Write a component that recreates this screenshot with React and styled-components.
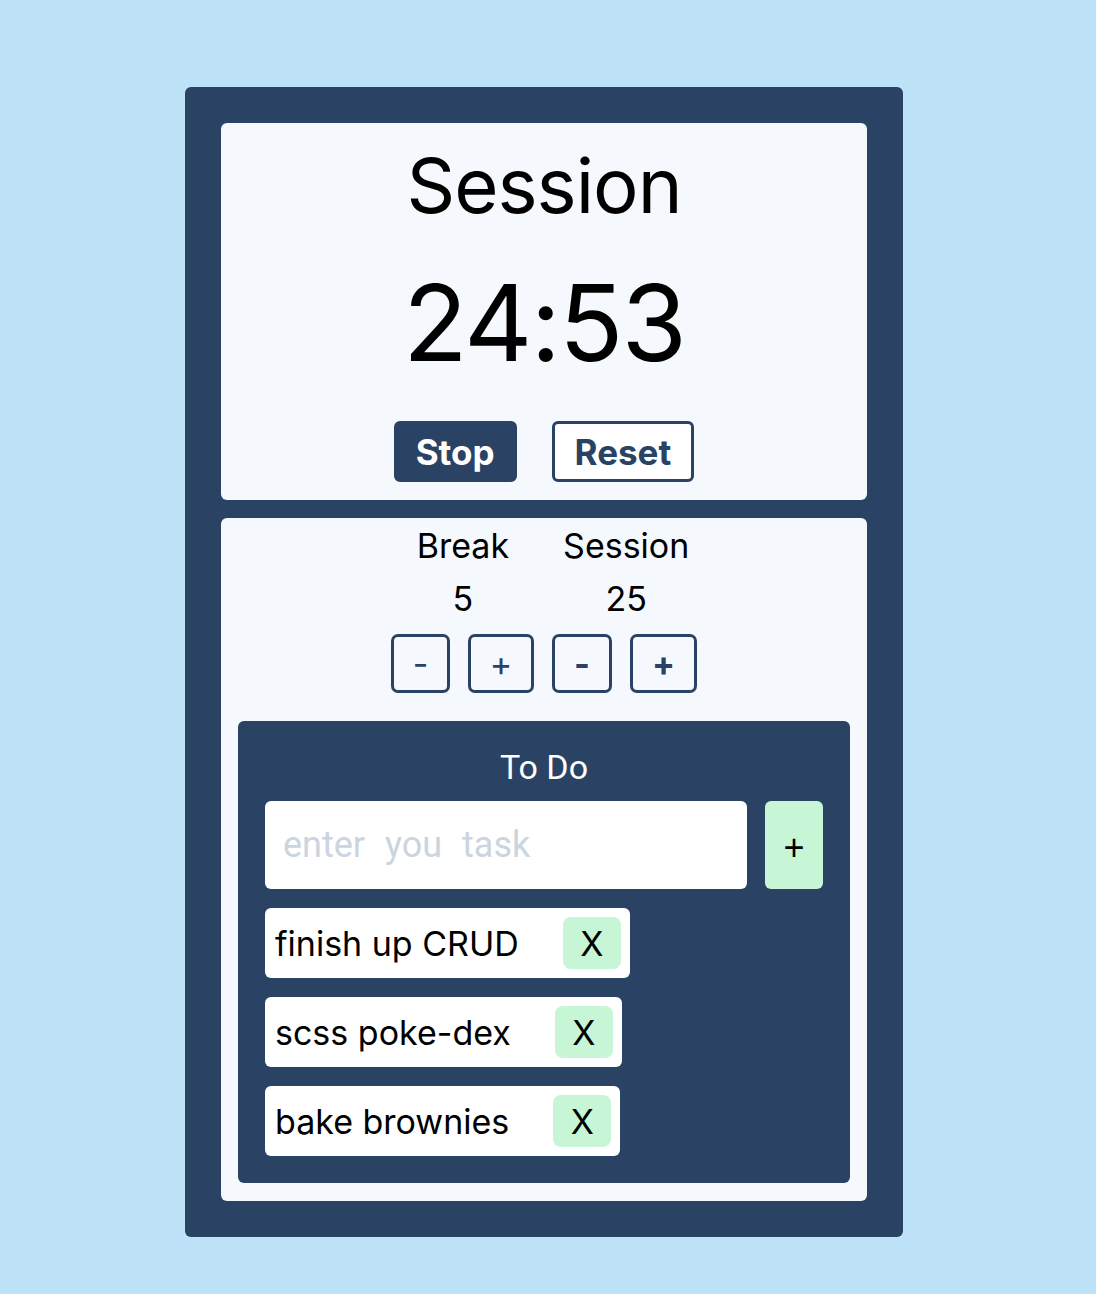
import React from "react";
import styled, { createGlobalStyle } from "styled-components";

const Global = createGlobalStyle`
  html, body { margin: 0; padding: 0; background: #bee3f8; }
  body { font-family: Inter, "Liberation Sans", sans-serif; color: #000; }
  * { box-sizing: border-box; }
`;

const Page = styled.div`
  min-height: 1294px;
  padding: 87px 0 0 185px;
`;

const Frame = styled.div`
  width: 718px;
  height: 1150px;
  background: #2a4365;
  border-radius: 6px;
  padding: 36px;
  display: flex;
  flex-direction: column;
  gap: 18px;
`;

const Card = styled.div`
  background: #f5f9fd;
  border-radius: 6px;
  display: flex;
  flex-direction: column;
  align-items: center;
`;

const TimerCard = styled(Card)`
  height: 377px;
  padding-top: 8px;
`;

const Title = styled.div`
  font-size: 76px;
  line-height: 108px;
  letter-spacing: -1px;
`;

const Clock = styled.div`
  font-size: 106px;
  line-height: 140px;
  margin-top: 14px;
  letter-spacing: -2px;
`;

const Controls = styled.div`
  display: flex;
  gap: 35px;
  margin-top: 28px;
`;

const MainButton = styled.button`
  height: 61px;
  padding: 0 ${(p) => (p.$outline ? 20 : 19)}px;
  border-radius: 6px;
  font-family: Inter, sans-serif;
  font-weight: 700;
  font-size: 35px;
  background: ${(p) => (p.$outline ? "#fff" : "#2a4365")};
  color: ${(p) => (p.$outline ? "#2a4365" : "#fff")};
  border: 3px solid #2a4365;
  cursor: pointer;
`;

const SettingsCard = styled(Card)`
  flex: 1;
  padding: 0 17px 18px;
`;

const Lengths = styled.div`
  display: flex;
  gap: 54px;
  margin-top: 6px;
  padding-left: 18px;
`;

const LengthCol = styled.div`
  display: flex;
  flex-direction: column;
  align-items: center;
`;

const Label = styled.div`
  font-size: 34px;
  line-height: 44px;
`;

const Value = styled.div`
  font-size: 34px;
  line-height: 44px;
  margin-top: 9px;
`;

const Steppers = styled.div`
  display: flex;
  gap: 18px;
  margin-top: 13px;
`;

const Step = styled.button`
  width: ${(p) => p.$w}px;
  height: 59px;
  border: 3px solid #2a4365;
  border-radius: 7px;
  background: transparent;
  color: #2a4365;
  font-family: Inter, sans-serif;
  font-size: 34px;
  font-weight: ${(p) => (p.$bold ? 700 : 400)};
  padding: 0;
  cursor: pointer;
`;

const Todo = styled.div`
  align-self: stretch;
  margin-top: 28px;
  flex: 1;
  background: #2a4365;
  border-radius: 6px;
  padding: 21px 27px 0;
  display: flex;
  flex-direction: column;
`;

const TodoTitle = styled.div`
  color: #fff;
  text-align: center;
  font-family: Roboto, sans-serif;
  font-size: 34px;
  line-height: 50px;
`;

const AddRow = styled.div`
  display: flex;
  gap: 18px;
  margin-top: 9px;
`;

const Input = styled.input`
  width: 482px;
  height: 88px;
  border: none;
  border-radius: 6px;
  background: #fff;
  padding: 0 18px;
  font-family: Roboto, sans-serif;
  font-size: 36px;
  word-spacing: 11px;
  outline: none;
  &::placeholder { color: #cbd5e0; }
`;

const AddButton = styled.button`
  width: 58px;
  height: 88px;
  border: none;
  border-radius: 6px;
  background: #c6f6d5;
  font-size: 36px;
  color: #000;
  padding: 6px 0 0;
`;

const List = styled.div`
  display: flex;
  flex-direction: column;
  align-items: flex-start;
  gap: 19px;
  margin-top: 19px;
`;

const Item = styled.div`
  height: 70px;
  background: #fff;
  border-radius: 6px;
  display: flex;
  align-items: center;
  padding: 0 9px 0 10px;
  gap: 44px;
`;

const ItemText = styled.span`
  font-size: 34px;
`;

const Remove = styled.button`
  width: 58px;
  height: 52px;
  border: none;
  border-radius: 8px;
  background: #c6f6d5;
  font-family: Inter, sans-serif;
  font-size: 34px;
  color: #000;
  padding: 0;
`;

const tasks = ["finish up CRUD", "scss poke-dex", "bake brownies"];

export default function App() {
  return (
    <>
      <Global />
      <Page>
        <Frame>
          <TimerCard>
            <Title>Session</Title>
            <Clock>24:53</Clock>
            <Controls>
              <MainButton>Stop</MainButton>
              <MainButton $outline>Reset</MainButton>
            </Controls>
          </TimerCard>
          <SettingsCard>
            <Lengths>
              <LengthCol>
                <Label>Break</Label>
                <Value>5</Value>
              </LengthCol>
              <LengthCol>
                <Label>Session</Label>
                <Value>25</Value>
              </LengthCol>
            </Lengths>
            <Steppers>
              <Step $w={59}>-</Step>
              <Step $w={66}>+</Step>
              <Step $w={60} $bold>-</Step>
              <Step $w={67} $bold>+</Step>
            </Steppers>
            <Todo>
              <TodoTitle>To Do</TodoTitle>
              <AddRow>
                <Input placeholder="enter you task" />
                <AddButton>+</AddButton>
              </AddRow>
              <List>
                {tasks.map((t) => (
                  <Item key={t}>
                    <ItemText>{t}</ItemText>
                    <Remove>X</Remove>
                  </Item>
                ))}
              </List>
            </Todo>
          </SettingsCard>
        </Frame>
      </Page>
    </>
  );
}
